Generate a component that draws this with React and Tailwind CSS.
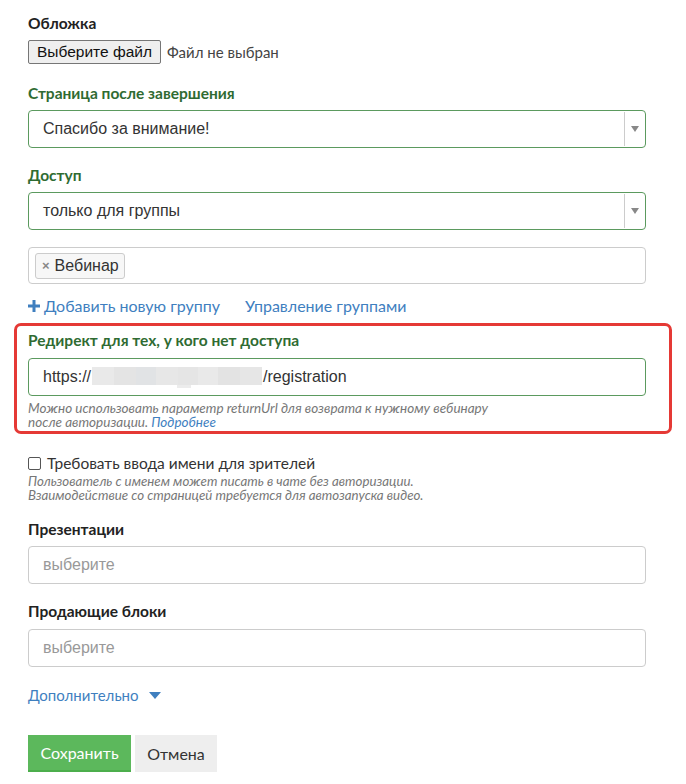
import React from "react";

const P = { fontFamily: "Lato, 'Open Sans', 'Noto Sans', sans-serif" };
const A = { fontFamily: "'Liberation Sans', Arial, sans-serif" };

function Label({ children, green }) {
  return (
    <div
      className={`text-[15.5px] font-bold leading-[20px] ${green ? "text-[#2f6b32]" : "text-[#222]"}`}
      style={P}
    >
      {children}
    </div>
  );
}

function Select({ value }) {
  return (
    <div className="flex h-[38px] items-stretch rounded-[4px] border border-[#5b9a5e] bg-white">
      <div className="flex flex-1 items-center pl-[14px] text-[16px] text-[#333]" style={A}>
        {value}
      </div>
      <div className="my-[1px] flex w-[21px] items-center justify-center border-l border-[#ccc]">
        <svg width="8" height="6" viewBox="0 0 8 6">
          <path d="M0 0h8L4 6z" fill="#888" />
        </svg>
      </div>
    </div>
  );
}

function Placeholder({ text }) {
  return (
    <div
      className="flex h-[38px] items-center rounded-[4px] border border-[#ccc] bg-white pl-[14px] text-[16px] text-[#999]"
      style={A}
    >
      {text}
    </div>
  );
}

const blur = [
  ["#e9e9e9", 22],
  ["#e4e4e4", 22],
  ["#e1e3e5", 20],
  ["#e7e7e7", 22],
  ["#e5e5e5", 20],
  ["#e9e9e9", 20],
  ["#e3e3e3", 22],
  ["#e6e6e6", 22],
];

export default function App() {
  return (
    <div className="min-h-[784px] w-[686px] bg-white pl-[28px] pr-[40px] pt-[13px]">
      <Label>Обложка</Label>
      <div className="mt-[7px] flex h-[24px] items-center">
        <div
          className="flex h-[24px] items-center rounded-[2px] border border-[#767676] bg-[#efefef] px-[8px] text-[15.5px] text-[#111]"
          style={A}
        >
          Выберите файл
        </div>
        <span className="ml-[6px] text-[15px] leading-[20px] text-[#444]" style={P}>
          Файл не выбран
        </span>
      </div>

      <div className="mt-[19px]">
        <Label green>Страница после завершения</Label>
      </div>
      <div className="mt-[7px]">
        <Select value="Спасибо за внимание!" />
      </div>

      <div className="mt-[17px]">
        <Label green>Доступ</Label>
      </div>
      <div className="mt-[7px]">
        <Select value="только для группы" />
      </div>

      <div className="mt-[17px] flex h-[37px] items-center rounded-[4px] border border-[#ccc] bg-white pl-[6px]">
        <div
          className="flex h-[26px] items-center rounded-[3px] border border-[#ccc] bg-[#f7f7f7] pl-[6px] pr-[5px] text-[16px] text-[#333]"
          style={A}
        >
          <span className="mr-[5px] text-[13px] font-bold text-[#888]">×</span>
          Вебинар
        </div>
      </div>

      <div className="mt-[12px] flex h-[20px] items-center text-[16px] leading-[20px] text-[#3f7fbf]" style={P}>
        <svg width="12" height="12" viewBox="0 0 12 12" className="mr-[4px]">
          <path d="M4.5 0h3v4.5H12v3H7.5V12h-3V7.5H0v-3h4.5z" fill="#3f7fbf" />
        </svg>
        <span>Добавить новую группу</span>
        <span className="ml-[25px]">Управление группами</span>
      </div>

      <div className="-ml-[14px] mt-[7px] w-[658px] rounded-[7px] border-[3px] border-[#e53935] pb-[2px] pl-[11px] pr-[23px] pt-[4px]">
        <Label green>Редирект для тех, у кого нет доступа</Label>
        <div
          className="mt-[8px] flex h-[38px] items-center rounded-[4px] border border-[#5b9a5e] bg-white pl-[14px] text-[16px] text-[#333]"
          style={A}
        >
          https://
          <span className="relative mx-[1px] flex h-[20px] w-[170px]">
            {blur.map(([c, w], i) => (
              <span key={i} className="h-[18px]" style={{ background: c, width: w }} />
            ))}
            <span className="absolute left-[85px] top-[18px] h-[3px] w-[14px] bg-[#ececec]" />
          </span>
          /registration
        </div>
        <div className="mt-[5px] text-[13.5px] italic leading-[14px] text-[#777]" style={P}>
          Можно использовать параметр returnUrl для возврата к нужному вебинару
          <br />
          после авторизации. <span className="text-[#3f7fbf]">Подробнее</span>
        </div>
      </div>

      <div className="mt-[19px] flex h-[20px] items-center text-[15.5px] leading-[20px] text-[#333]" style={P}>
        <span className="mr-[6px] inline-block h-[13px] w-[13px] rounded-[2px] border border-[#555] bg-white" />
        Требовать ввода имени для зрителей
      </div>
      <div className="mt-[1px] text-[13.3px] italic leading-[14px] text-[#777]" style={P}>
        Пользователь с именем может писать в чате без авторизации.
        <br />
        Взаимодействие со страницей требуется для автозапуска видео.
      </div>

      <div className="mt-[17px]">
        <Label>Презентации</Label>
      </div>
      <div className="mt-[7px]">
        <Placeholder text="выберите" />
      </div>

      <div className="mt-[17px]">
        <Label>Продающие блоки</Label>
      </div>
      <div className="mt-[8px]">
        <Placeholder text="выберите" />
      </div>

      <div className="mt-[18px] flex h-[20px] items-center text-[15px] leading-[20px] text-[#3f7fbf]" style={P}>
        Дополнительно
        <svg width="12" height="7" viewBox="0 0 12 7" className="ml-[10px]">
          <path d="M0 0h12L6 7z" fill="#3f7fbf" />
        </svg>
      </div>

      <div className="mt-[30px] flex gap-[4px]">
        <div
          className="flex h-[37px] w-[103px] items-center justify-center border-b-2 border-[#4cae4c] bg-[#5cb85c] text-[16px] text-white"
          style={P}
        >
          Сохранить
        </div>
        <div
          className="flex h-[37px] w-[82px] items-center justify-center bg-[#eeeeee] text-[16px] text-[#333]"
          style={P}
        >
          Отмена
        </div>
      </div>
    </div>
  );
}
